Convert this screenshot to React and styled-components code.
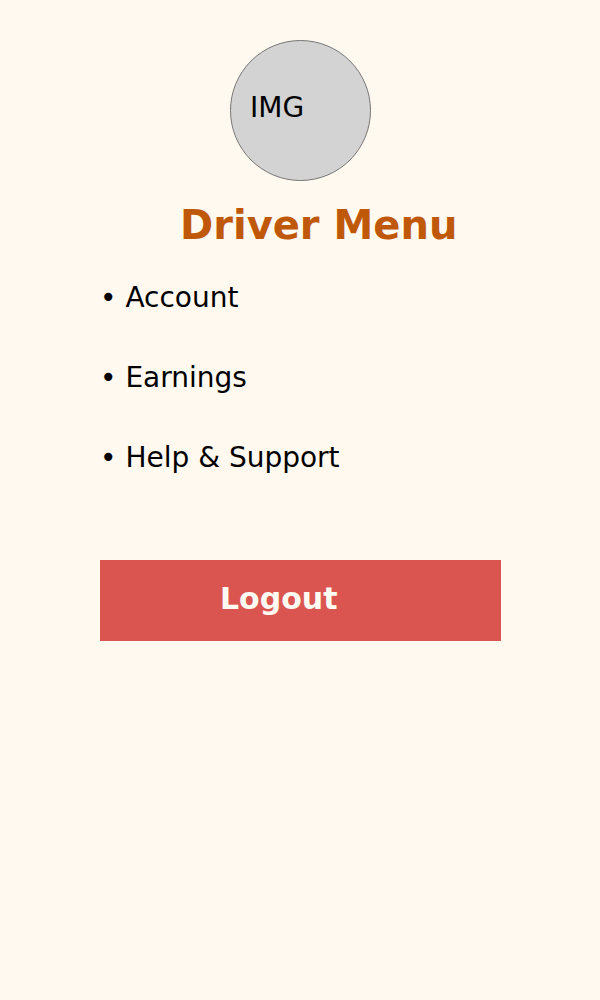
import React from "react";
import styled, { createGlobalStyle } from "styled-components";

const GlobalStyle = createGlobalStyle`
  html, body {
    margin: 0;
    padding: 0;
    background-color: #fff9ef;
    font-family: "DejaVu Sans", "Liberation Sans", sans-serif;
  }
`;

const Page = styled.div`
  width: 600px;
  height: 1000px;
  background-color: #fff9ef;
  display: flex;
  flex-direction: column;
  padding-top: 40px;
  box-sizing: border-box;
`;

const Avatar = styled.div`
  width: 141px;
  height: 141px;
  margin-left: 230px;
  border-radius: 50%;
  background-color: #d3d3d3;
  border: 1px solid #777;
  box-sizing: border-box;
  display: flex;
  align-items: center;
  padding-left: 19px;
  padding-bottom: 5px;
  font-size: 28px;
  line-height: 1;
  color: #000;
`;

const Title = styled.h1`
  margin: 24px 0 0 0;
  padding-left: 180px;
  font-size: 40px;
  line-height: 1;
  font-weight: bold;
  color: #c0580a;
`;

const MenuList = styled.ul`
  list-style: none;
  margin: 13px 0 0 0;
  padding: 0 0 0 100px;
`;

const MenuItem = styled.li`
  font-size: 28px;
  line-height: 80px;
  height: 80px;
  color: #000;
`;

const LogoutBtn = styled.button`
  margin: 62px 0 0 100px;
  width: 401px;
  height: 81px;
  border: none;
  border-radius: 0;
  background-color: #db5550;
  color: #fffaf2;
  font-family: "DejaVu Sans", "Liberation Sans", sans-serif;
  font-size: 30px;
  font-weight: bold;
  line-height: 76px;
  text-align: left;
  padding: 0 0 4px 120px;
  cursor: pointer;
`;

const items = ["Account", "Earnings", "Help & Support"];

const App = () => {
  return (
    <>
      <GlobalStyle />
      <Page>
        <Avatar>IMG</Avatar>
        <Title>Driver Menu</Title>
        <MenuList>
          {items.map((x) => (
            <MenuItem key={x}>{`• ${x}`}</MenuItem>
          ))}
        </MenuList>
        <LogoutBtn>Logout</LogoutBtn>
      </Page>
    </>
  );
};

export default App;
